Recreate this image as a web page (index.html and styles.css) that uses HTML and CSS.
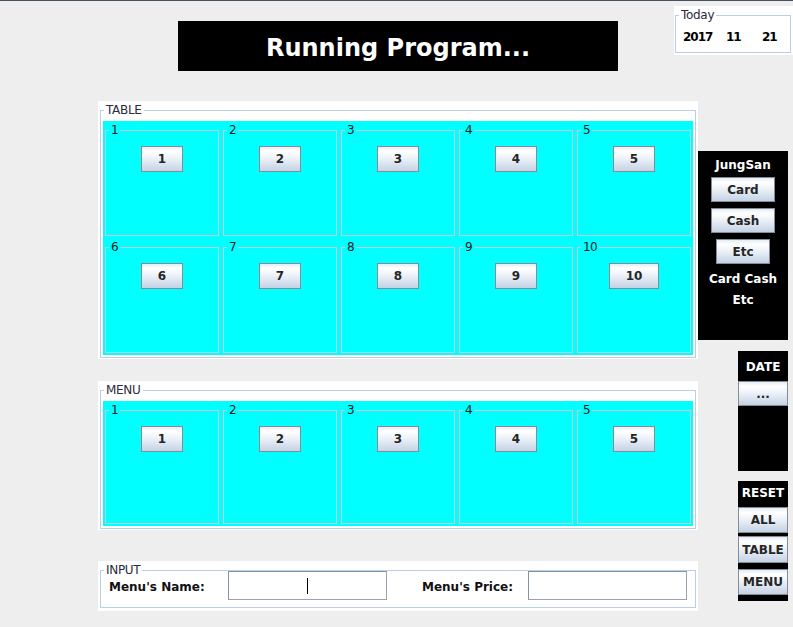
FILE: index.html
```html
<!DOCTYPE html>
<html lang="en">
<head>
<meta charset="utf-8">
<title>Running Program</title>
<link rel="stylesheet" href="styles.css">
</head>
<body>
<div class="topbar"></div>
<header class="header">
  <div class="title">Running Program...</div>
  <div class="today">
    <div class="today-box">
      <span class="legend">Today</span>
      <div class="today-row"><span class="d-year">2017</span><span class="d-month">11</span><span class="d-day">21</span></div>
    </div>
  </div>
</header>
<main class="main">
  <div class="left">
    <section class="panel">
      <div class="panel-box">
        <span class="legend">TABLE</span>
        <div class="grid grid-table">
          <div class="cell"><div class="cell-box"><span class="cell-label">1</span><div class="btn">1</div></div></div>
          <div class="cell"><div class="cell-box"><span class="cell-label">2</span><div class="btn">2</div></div></div>
          <div class="cell"><div class="cell-box"><span class="cell-label">3</span><div class="btn">3</div></div></div>
          <div class="cell"><div class="cell-box"><span class="cell-label">4</span><div class="btn">4</div></div></div>
          <div class="cell"><div class="cell-box"><span class="cell-label">5</span><div class="btn">5</div></div></div>
          <div class="cell"><div class="cell-box"><span class="cell-label">6</span><div class="btn">6</div></div></div>
          <div class="cell"><div class="cell-box"><span class="cell-label">7</span><div class="btn">7</div></div></div>
          <div class="cell"><div class="cell-box"><span class="cell-label">8</span><div class="btn">8</div></div></div>
          <div class="cell"><div class="cell-box"><span class="cell-label">9</span><div class="btn">9</div></div></div>
          <div class="cell"><div class="cell-box"><span class="cell-label">10</span><div class="btn">10</div></div></div>
        </div>
      </div>
    </section>
    <section class="panel panel-menu">
      <div class="panel-box">
        <span class="legend">MENU</span>
        <div class="grid grid-menu">
          <div class="cell"><div class="cell-box"><span class="cell-label">1</span><div class="btn">1</div></div></div>
          <div class="cell"><div class="cell-box"><span class="cell-label">2</span><div class="btn">2</div></div></div>
          <div class="cell"><div class="cell-box"><span class="cell-label">3</span><div class="btn">3</div></div></div>
          <div class="cell"><div class="cell-box"><span class="cell-label">4</span><div class="btn">4</div></div></div>
          <div class="cell"><div class="cell-box"><span class="cell-label">5</span><div class="btn">5</div></div></div>
        </div>
      </div>
    </section>
    <section class="panel panel-input">
      <div class="panel-box input-box">
        <span class="legend">INPUT</span>
        <div class="input-row">
          <div class="in-label in-label-name">Menu's Name:</div>
          <div class="field"><span class="caret"></span></div>
          <div class="in-label in-label-price">Menu's Price:</div>
          <div class="field"></div>
        </div>
      </div>
    </section>
  </div>
  <aside class="right">
    <div class="jung">
      <div class="side-title">JungSan</div>
      <div class="btn btn-sm btn-card">Card</div>
      <div class="btn btn-sm btn-gap">Cash</div>
      <div class="btn btn-sm btn-gap">Etc</div>
      <div class="jung-text">Card Cash<br>Etc</div>
    </div>
    <div class="date">
      <div class="side-title date-title">DATE</div>
      <div class="btn btn-wide btn-date">...</div>
    </div>
    <div class="reset">
      <div class="side-title reset-title">RESET</div>
      <div class="btn btn-wide btn-all">ALL</div>
      <div class="btn btn-wide btn-tbl">TABLE</div>
      <div class="btn btn-wide btn-mnu">MENU</div>
    </div>
  </aside>
</main>
</body>
</html>
```
FILE: styles.css
```css
* { box-sizing: border-box; }

body {
  margin: 0;
  width: 793px;
  height: 627px;
  overflow: hidden;
  background: #eeeeee;
  font-family: "DejaVu Sans", sans-serif;
  color: #333333;
}

.topbar {
  height: 1px;
  background: #48525d;
}

.header {
  display: flex;
  align-items: flex-start;
  height: 70px;
}

.title {
  margin: 20px 0 0 178px;
  width: 440px;
  height: 50px;
  padding-top: 3px;
  background: #000000;
  color: #ffffff;
  font-weight: bold;
  font-size: 24px;
  display: flex;
  align-items: center;
  justify-content: center;
}

.today {
  margin: 5px 0 0 56px;
  width: 119px;
  height: 49px;
  background: #ffffff;
  padding: 9px 2px 2px 1px;
}

.today-box {
  position: relative;
  height: 100%;
  border: 1px solid #b8cfe5;
}

.legend {
  position: absolute;
  top: -8px;
  left: 3px;
  padding: 0 2px;
  background: #ffffff;
  font-size: 12px;
  line-height: 14px;
  letter-spacing: -0.3px;
  color: #2b2b3a;
  white-space: nowrap;
}

.today-row {
  display: flex;
  padding: 14px 0 0 7px;
  font-size: 12px;
  font-weight: bold;
  line-height: 14px;
  letter-spacing: -1px;
  color: #000000;
}

.d-year { width: 43px; }
.d-month { width: 36px; }

.main {
  display: flex;
  align-items: flex-start;
}

.left {
  width: 600px;
  margin: 30px 0 0 98px;
  display: flex;
  flex-direction: column;
}

.panel {
  background: #ffffff;
  padding: 9px 2px 1px 2px;
}

.panel-menu { margin-top: 22px; }

.panel-input {
  margin-top: 31px;
  padding-bottom: 3px;
}

.panel-box {
  position: relative;
  border: 1px solid #b8cfe5;
  padding: 10px 2px 2px 2px;
}

.grid {
  display: grid;
  grid-template-columns: repeat(5, 118px);
  background: #00ffff;
}

.grid-table { grid-auto-rows: 117px; }
.grid-menu { grid-auto-rows: 125px; }

.cell {
  padding: 9px 2px 2px 2px;
}

.cell-box {
  position: relative;
  height: 100%;
  border: 1px solid #c6c8d2;
  display: flex;
  justify-content: center;
  align-items: flex-start;
  padding-top: 15px;
}

.cell-label {
  position: absolute;
  top: -8px;
  left: 3px;
  padding: 0 2px;
  background: #00ffff;
  font-size: 12px;
  line-height: 14px;
  letter-spacing: -0.7px;
  color: #1a1a1a;
}

.btn {
  height: 26px;
  padding: 0 16px;
  border: 1px solid #858c97;
  background: linear-gradient(180deg, #e4ecf5 0%, #ffffff 18%, #eef3f9 45%, #c4d2e4 100%);
  font-size: 12px;
  font-weight: bold;
  color: #262626;
  display: flex;
  align-items: center;
  justify-content: center;
  white-space: nowrap;
}

.btn-sm {
  height: 25px;
  padding: 0 15px;
}

.btn-card { margin-top: 4px; }
.btn-gap { margin-top: 6px; }

.btn-wide {
  width: 50px;
  padding: 0;
}

.input-box {
  height: 38px;
  padding: 0;
}

.input-row {
  display: flex;
  align-items: center;
  height: 29px;
}

.in-label {
  font-size: 12px;
  font-weight: bold;
  color: #111111;
  white-space: nowrap;
  padding-top: 2px;
}

.in-label-name {
  width: 127px;
  padding-left: 8px;
}

.in-label-price {
  width: 141px;
  padding-left: 35px;
}

.field {
  width: 159px;
  height: 29px;
  background: #ffffff;
  border: 1px solid #8693a1;
  border-right-color: #9aa3ad;
  border-bottom-color: #9aa3ad;
  display: flex;
  align-items: center;
  justify-content: center;
}

.caret {
  width: 1px;
  height: 16px;
  background: #000000;
}

.right {
  width: 90px;
  margin-top: 80px;
  display: flex;
  flex-direction: column;
  align-items: flex-end;
}

.jung {
  width: 90px;
  height: 189px;
  background: #000000;
  display: flex;
  flex-direction: column;
  align-items: center;
  padding-top: 6px;
}

.side-title {
  color: #ffffff;
  font-size: 12px;
  font-weight: bold;
  line-height: 16px;
  text-align: center;
}

.jung-text {
  margin-top: 5px;
  color: #ffffff;
  font-size: 12px;
  font-weight: bold;
  line-height: 21px;
  text-align: center;
}

.date {
  width: 50px;
  height: 120px;
  margin-top: 11px;
  background: #000000;
  padding-top: 8px;
}

.btn-date {
  margin-top: 6px;
  height: 25px;
}

.reset {
  width: 50px;
  height: 120px;
  margin-top: 10px;
  background: #000000;
  padding-top: 4px;
}

.btn-all { margin-top: 6px; }
.btn-tbl { margin-top: 3px; height: 27px; }
.btn-mnu { margin-top: 6px; }
```
